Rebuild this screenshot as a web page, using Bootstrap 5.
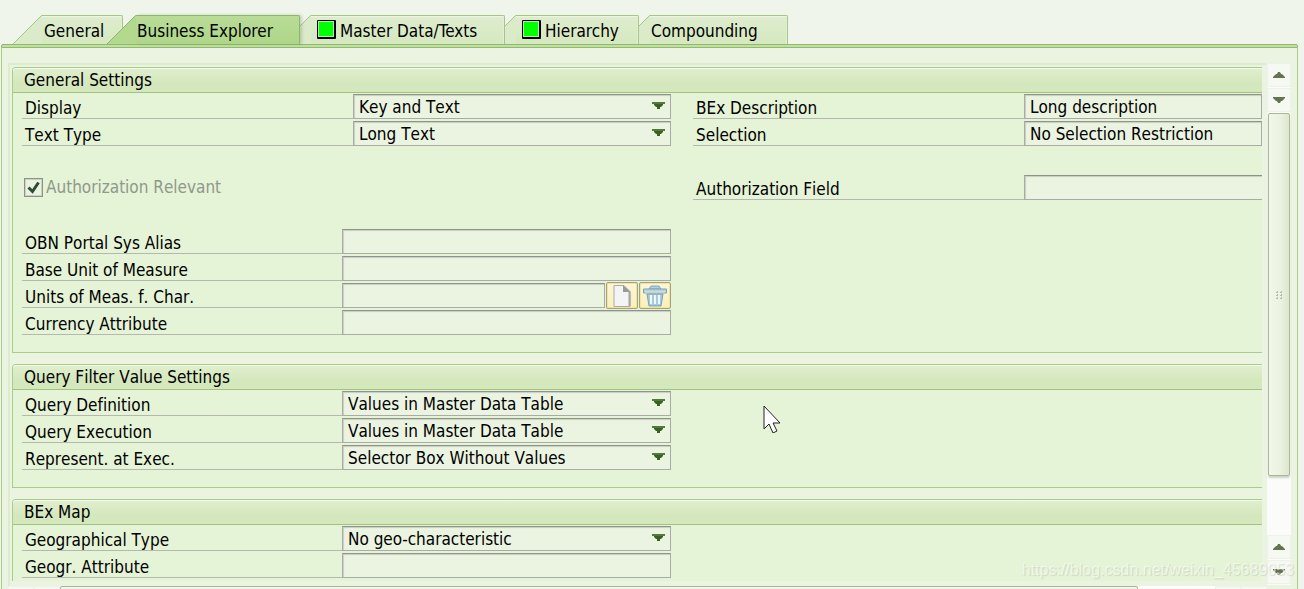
<!DOCTYPE html>
<html lang="en">
<head>
<meta charset="utf-8">
<meta name="viewport" content="width=device-width, initial-scale=1">
<title>Characteristic maintenance</title>
<link href="https://cdn.jsdelivr.net/npm/bootstrap@5.3.0/dist/css/bootstrap.min.css" rel="stylesheet">
<style>
:root{--line:#a9cd89;--line-dark:#8fbb6b;--group:#e5f3d6;--panel:#ebf4e0;--fieldline:#a9aca6}
body{background:#f0f5eb;color:#000;font:17px/22px "DejaVu Sans Condensed","DejaVu Sans",sans-serif;font-kerning:none;font-variant-ligatures:none}
.shell{height:100vh;padding:15px 6px 0 1px}
/* tab strip */
.tabs{padding-left:12px;z-index:1}
.tab-item{height:29px;background:none;border:0;padding:0;color:#000}
.tab-item svg{flex:none;height:29px}
.tab-item .slant{width:29px}
.tab-item .notch{width:11px}
.tab-body{height:29px;background:linear-gradient(#deedce,#d5e8bf);border:1px solid #a5c58a;border-width:1px 1px 0 0;border-top-right-radius:2px;box-shadow:inset 0 1px #eef6e2,inset -1px 0 #e2efd2;padding-top:1px;white-space:nowrap}
.tab-item.active{margin-left:-16px;z-index:2}
.tab-item.active .tab-body{background:linear-gradient(#b9dc97,#aed688);border-color:#8db76c;box-shadow:2px 0 3px rgba(80,100,60,.25)}
.lamp{flex:none;width:19px;height:19px;background:#0f0;border:1px solid #000;border-width:1px 2px 2px 1px;box-shadow:inset 0 0 0 1px #b9e6ae;border-radius:1px;margin:0 4px 2px 0}
.pad-a{padding-left:2px;width:81px}.pad-b{padding-left:1px;width:164px}.pad-c{padding-left:6px;width:194px}.pad-d{padding-left:6px;width:123px}.pad-e{padding-left:1px;width:138px}
.bar{height:4px;background:#c2dfa3;border:1px solid var(--line-dark);border-radius:2px 2px 0 0;flex:none}
/* panel */
.panel{border:1px solid var(--line);border-width:0 1px;background:var(--panel);padding:15px 6px 0;min-height:0}
.main-area{min-height:0}
.content{border:2px solid #ddebcf;border-width:2px 0 0 2px;padding:2px 4px 0 2px;min-height:0}
.view{min-height:0;margin-bottom:5px}
.group{background:var(--group);border:1px solid var(--line);border-right:0;border-top-left-radius:4px;padding-bottom:15px;margin-bottom:11px}
.group-title{height:25px;font:inherit;line-height:24px;padding-left:11px;background:linear-gradient(#e0efcf,#d5e8bd 60%);border-bottom:1px solid #9fc480;box-shadow:inset 0 1px #f4faea;border-top-left-radius:3px}
.cols{display:grid;grid-template-columns:649fr 569fr;column-gap:22px;padding:1px 0 0 9px}
.line{display:grid;height:25px;margin-bottom:2px}
.wide{grid-template-columns:331fr 318fr}
.std{grid-template-columns:320fr 329fr}
.right{grid-template-columns:331fr 238fr}
.line>label{height:25px;border-bottom:1px solid #b4b8b0;padding:3px 0 0 3px;line-height:22px;white-space:nowrap}
.field{appearance:none;width:100%;min-width:0;height:25px;border:1px solid var(--fieldline);border-top-color:#8f938b;border-radius:0;background:var(--panel);box-shadow:inset 1px 1px 1px #c8cfc0;padding:0 5px;font:inherit;line-height:22px;color:#000;outline:0;font-kerning:none;font-variant-ligatures:none}
select.field{background:var(--panel) url("data:image/svg+xml,%3Csvg xmlns='http://www.w3.org/2000/svg' width='13' height='8'%3E%3Cpath fill='%23527a3d' d='M0 0h13v2H0z'/%3E%3Cpath fill='%23386222' d='M2 2h9v1l-2 2H8v2H5V5H4L2 3z'/%3E%3C/svg%3E") no-repeat right 5px top 7px}
.clipped{border-right:0}
.gap-line{height:27px}
.check-line{padding-bottom:3px}
.tick{appearance:none;width:19px;height:19px;border:1px solid #8e938a;background:#eaf3df url("data:image/svg+xml,%3Csvg xmlns='http://www.w3.org/2000/svg' width='17' height='17'%3E%3Cpath fill='none' stroke='%232f4a35' stroke-width='3' d='M3.500 8.500l4 4 6-9'/%3E%3C/svg%3E") no-repeat center;box-shadow:inset 0 0 0 1px #cbd2c4;margin:0 3px 0 2px}
.dim{color:#8f988b}
.with-tools{column-gap:1px}
.tool{width:32px;height:27px;margin-top:-1px;padding:0;border:1px solid #a5a27e;border-radius:2px;background:linear-gradient(#fdf6d8,#fbefba);box-shadow:inset 0 0 0 1px #f1e3a0;line-height:0}
/* scroll bars */
.vbar{width:24px;background:#fbfcfa;margin:0 0 1px 1px}
.vbar button,.hbar button{background:#f5f9f2;border:1px solid #eef2ea;padding:0;line-height:0}
.vbar button{height:24px;margin-bottom:1px}
.thumb{flex:362 1 0;width:22px;margin-left:1px;border:1px solid #a9b698;border-radius:2px;background:linear-gradient(90deg,#f1f7e9,#e9f2e0 60%,#dce6d0);box-shadow:0 2px 2px #ccd4c4}
.track{flex:59 1 0}
.hbar{height:3px;flex:none;padding-right:24px}
.hbar button{width:26px;height:20px}
.hthumb{height:20px;flex:1078 1 0;border:1px solid #a9b698;border-radius:2px;background:#f0f6e9}
.htrack{height:20px;flex:77 1 0;background:#fdfdfd}
/* overlays */
.pointer{left:763px;top:405px;z-index:5}
.stamp{right:10px;bottom:8px;z-index:4;font:16px/22px "Liberation Sans",sans-serif;color:rgba(255,255,255,.6);text-shadow:1px 1px 1px rgba(110,125,100,.22)}
</style>
</head>
<body class="overflow-hidden position-relative">
<main class="shell d-flex flex-column">
  <nav class="tabs d-flex position-relative" role="tablist">
    <button class="tab-item d-flex" role="tab"><svg class="slant" viewBox="0 0 29 29"><path d="M0 29L28 1h1v28z" fill="#dbebc9"/><path d="M0 29L28.500.5H29" fill="none" stroke="#a5c58a"/></svg><span class="tab-body d-flex align-items-center pad-a">General</span></button>
    <button class="tab-item active d-flex position-relative" role="tab" aria-selected="true"><svg class="slant" viewBox="0 0 29 29"><path d="M0 29L28 1h1v28z" fill="#b3d98f"/><path d="M0 29L28.500.5H29" fill="none" stroke="#8db76c"/></svg><span class="tab-body d-flex align-items-center pad-b">Business Explorer</span></button>
    <button class="tab-item d-flex" role="tab"><svg class="notch" viewBox="0 0 11 29"><path d="M0 11L10 1h1v28H0z" fill="#dbebc9"/><path d="M0 11L10.500.5H11" fill="none" stroke="#a5c58a"/></svg><span class="tab-body d-flex align-items-center pad-c"><i class="lamp"></i>Master Data/Texts</span></button>
    <button class="tab-item d-flex" role="tab"><svg class="notch" viewBox="0 0 11 29"><path d="M0 11L10 1h1v28H0z" fill="#dbebc9"/><path d="M0 11L10.500.5H11" fill="none" stroke="#a5c58a"/></svg><span class="tab-body d-flex align-items-center pad-d"><i class="lamp"></i>Hierarchy</span></button>
    <button class="tab-item d-flex" role="tab"><svg class="notch" viewBox="0 0 11 29"><path d="M0 11L10 1h1v28H0z" fill="#dbebc9"/><path d="M0 11L10.500.5H11" fill="none" stroke="#a5c58a"/></svg><span class="tab-body d-flex align-items-center pad-e">Compounding</span></button>
  </nav>
  <div class="bar"></div>
  <div class="panel d-flex flex-column flex-grow-1">
    <div class="main-area d-flex flex-grow-1">
      <div class="content d-flex flex-column flex-grow-1">
        <div class="view flex-grow-1 overflow-hidden">
          <section class="group">
            <h2 class="group-title m-0">General Settings</h2>
            <div class="cols">
              <div>
                <div class="line wide"><label for="display">Display</label><select id="display" class="field"><option>Key and Text</option></select></div>
                <div class="line wide"><label for="ttype">Text Type</label><select id="ttype" class="field"><option>Long Text</option></select></div>
                <div class="gap-line"></div>
                <div class="gap-line check-line d-flex align-items-center"><input class="tick" type="checkbox" id="auth" checked disabled><label class="dim" for="auth">Authorization Relevant</label></div>
                <div class="gap-line"></div>
                <div class="line std"><label for="obn">OBN Portal Sys Alias</label><input id="obn" class="field"></div>
                <div class="line std"><label for="base">Base Unit of Measure</label><input id="base" class="field"></div>
                <div class="line std"><label for="units">Units of Meas. f. Char.</label>
                  <div class="with-tools d-flex"><input id="units" class="field">
                    <button class="tool flex-shrink-0" aria-label="Create"><svg width="20" height="22" viewBox="0 0 20 22"><path d="M2 .5h10l6 6v15H2z" fill="#f4f4f4" stroke="#aaa"/><path d="M17.500 7v14" stroke="#a5a5a5" stroke-width="2"/><path d="M11 0l7.500 7H11z" fill="#999"/></svg></button>
                    <button class="tool flex-shrink-0" aria-label="Delete"><svg width="24" height="24" viewBox="0 0 24 24"><path d="M6 5l2-3h8l2 3z" fill="#b5cfdd" stroke="#7fa9c1"/><path d="M4 10h16l-2 12H6z" fill="#a9c8da" stroke="#76a3bd"/><path d="M.5 5h23v4H.5z" fill="#b9d0dc" stroke="#76a3bd"/><path d="M2 8h20" stroke="#f3e7c2"/><path d="M8 11v9M12 11v9M16 11v9" stroke="#eef6fa" stroke-width="2"/></svg></button>
                  </div></div>
                <div class="line std"><label for="curr">Currency Attribute</label><input id="curr" class="field"></div>
              </div>
              <div>
                <div class="line right"><label for="bexd">BEx Description</label><input id="bexd" class="field" value="Long description"></div>
                <div class="line right"><label for="sel">Selection</label><input id="sel" class="field" value="No Selection Restriction"></div>
                <div class="gap-line"></div>
                <div class="line right"><label for="authf">Authorization Field</label><input id="authf" class="field clipped"></div>
              </div>
            </div>
          </section>
          <section class="group">
            <h2 class="group-title m-0">Query Filter Value Settings</h2>
            <div class="cols">
              <div>
                <div class="line std"><label for="qdef">Query Definition</label><select id="qdef" class="field"><option>Values in Master Data Table</option></select></div>
                <div class="line std"><label for="qexe">Query Execution</label><select id="qexe" class="field"><option>Values in Master Data Table</option></select></div>
                <div class="line std"><label for="repr">Represent. at Exec.</label><select id="repr" class="field"><option>Selector Box Without Values</option></select></div>
              </div>
            </div>
          </section>
          <section class="group">
            <h2 class="group-title m-0">BEx Map</h2>
            <div class="cols">
              <div>
                <div class="line std"><label for="geo">Geographical Type</label><select id="geo" class="field"><option>No geo-characteristic</option></select></div>
                <div class="line std"><label for="gattr">Geogr. Attribute</label><input id="gattr" class="field"></div>
              </div>
            </div>
          </section>
        </div>
      </div>
      <div class="vbar d-flex flex-column flex-shrink-0">
        <button aria-label="Scroll up"><svg width="14" height="8"><path d="M1 7V6l3-3h1l1-2h2l1 2h1l3 3v1z" fill="#667350"/></svg></button>
        <button aria-label="Scroll down"><svg width="14" height="8"><path d="M1 1v1l3 3h1l1 2h2l1-2h1l3-3V1z" fill="#667350"/></svg></button>
        <div class="thumb d-flex align-items-center justify-content-center"><svg width="7" height="9"><path d="M0 2.500h2M4 2.500h2M0 5.500h2M4 5.500h2M0 8.500h2M4 8.500h2" stroke="#b2bda5"/><path d="M1.500 1v1M5.500 1v1M1.500 4v1M5.500 4v1M1.500 7v1M5.500 7v1" stroke="#b2bda5"/></svg></div>
        <div class="track"></div>
        <button aria-label="Page up"><svg width="14" height="8"><path d="M1 7V6l3-3h1l1-2h2l1 2h1l3 3v1z" fill="#667350"/></svg></button>
        <button aria-label="Page down"><svg width="14" height="8"><path d="M1 1v1l3 3h1l1 2h2l1-2h1l3-3V1z" fill="#667350"/></svg></button>
      </div>
    </div>
    <div class="hbar d-flex overflow-hidden">
      <button aria-label="Scroll left"></button><button aria-label="Scroll right"></button>
      <div class="hthumb"></div><div class="htrack"></div>
      <button aria-label="Page left"></button><button aria-label="Page right"></button>
    </div>
  </div>
</main>
<svg class="pointer position-absolute" width="19" height="28" viewBox="0 0 19 28"><path d="M1 1v23l5-5 4 9 4-2-4-8h7z" fill="#fff" stroke="#222"/></svg>
<div class="stamp position-absolute">https://blog.csdn.net/weixin_45689053</div>
<script src="https://cdn.jsdelivr.net/npm/bootstrap@5.3.0/dist/js/bootstrap.bundle.min.js"></script>
</body>
</html>
